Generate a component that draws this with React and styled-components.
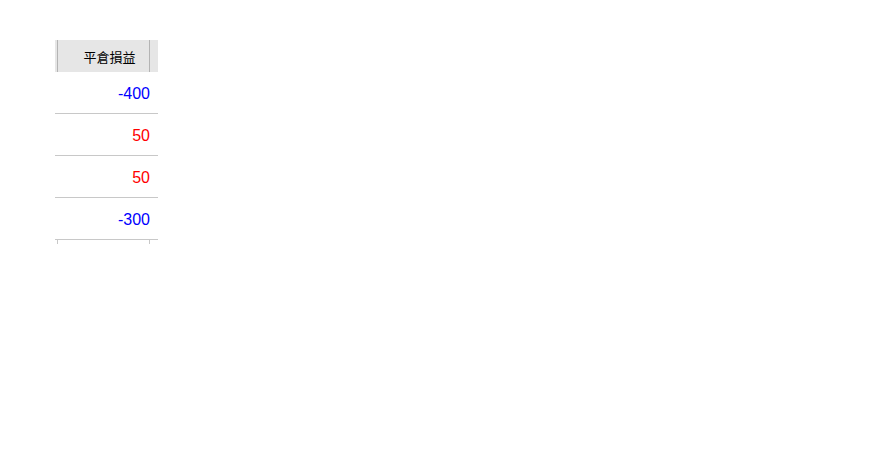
import styled, { createGlobalStyle } from "styled-components";

const Global = createGlobalStyle`
  body {
    margin: 0;
    background: #fff;
    font-family: "Liberation Sans", "Noto Sans CJK TC", Arial, sans-serif;
  }
`;

const Page = styled.div`
  padding: 40px 0 0 55px;
`;

const Grid = styled.div`
  width: 103px;
  display: flex;
  flex-direction: column;
`;

const HeaderRow = styled.div`
  display: flex;
  height: 32px;
  background: #e6e6e6;
`;

const Gutter = styled.div`
  width: ${props => props.w}px;
  flex-shrink: 0;
`;

const Divider = styled.div`
  width: 1px;
  background: #b4b4b4;
  flex-shrink: 0;
`;

const HeaderCell = styled.div`
  width: 91px;
  display: flex;
  align-items: center;
  justify-content: center;
  padding-left: 12px;
  box-sizing: border-box;
  font-size: 13px;
  color: #000;
`;

const Row = styled.div`
  height: 42px;
  box-sizing: border-box;
  border-bottom: 1px solid #c8c8c8;
  display: flex;
  align-items: center;
  justify-content: flex-end;
  padding: 2px 8px 0 0;
  font-size: 16px;
  color: ${props => (props.value < 0 ? "#0000ff" : "#ff0000")};
`;

const Footer = styled.div`
  display: flex;
  height: 4px;
`;

const FooterTick = styled.div`
  width: 1px;
  background: #c8c8c8;
  flex-shrink: 0;
`;

const rows = [-400, 50, 50, -300];

export default function App() {
  return (
    <>
      <Global />
      <Page>
        <Grid>
          <HeaderRow>
            <Gutter w={2} />
            <Divider />
            <HeaderCell>平倉損益</HeaderCell>
            <Divider />
            <Gutter w={8} />
          </HeaderRow>
          {rows.map((v, i) => (
            <Row key={i} value={v}>{v}</Row>
          ))}
          <Footer>
            <Gutter w={2} />
            <FooterTick />
            <Gutter w={91} />
            <FooterTick />
          </Footer>
        </Grid>
      </Page>
    </>
  );
}
